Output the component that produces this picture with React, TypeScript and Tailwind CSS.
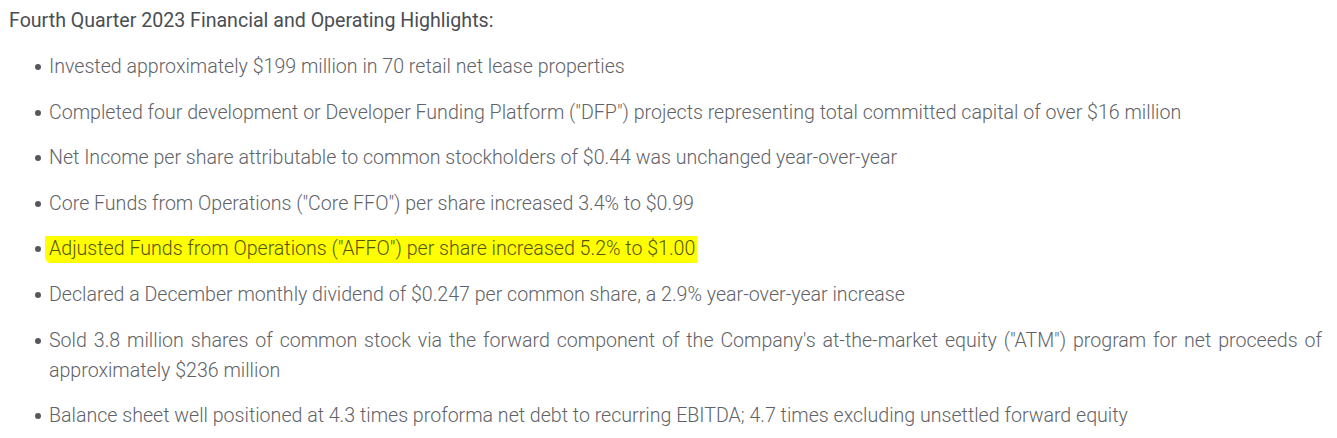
const items: { text: string; highlight?: boolean }[] = [
  { text: 'Invested approximately $199 million in 70 retail net lease properties' },
  {
    text: 'Completed four development or Developer Funding Platform ("DFP") projects representing total committed capital of over $16 million',
  },
  { text: 'Net Income per share attributable to common stockholders of $0.44 was unchanged year-over-year' },
  { text: 'Core Funds from Operations ("Core FFO") per share increased 3.4% to $0.99' },
  { text: 'Adjusted Funds from Operations ("AFFO") per share increased 5.2% to $1.00', highlight: true },
  { text: 'Declared a December monthly dividend of $0.247 per common share, a 2.9% year-over-year increase' },
  {
    text: "Sold 3.8 million shares of common stock via the forward component of the Company's at-the-market equity (\"ATM\") program for net proceeds of approximately $236 million",
  },
  {
    text: 'Balance sheet well positioned at 4.3 times proforma net debt to recurring EBITDA; 4.7 times excluding unsettled forward equity',
  },
];

export default function App() {
  return (
    <div className="w-[1337px] h-[438px] bg-white overflow-hidden pl-[9px] pr-[15px] pt-[7px] font-['Roboto',sans-serif] text-[#5f6368]">
      <p className="text-[19.6px] leading-[28px] font-normal text-[#4a4e53]">
        Fourth Quarter 2023 Financial and Operating Highlights:
      </p>
      <ul className="mt-[17px] flex flex-col gap-[15.6px]">
        {items.map((item) => (
          <li key={item.text} className="flex text-[19.6px] leading-[30px] font-light">
            <span className="w-[40px] shrink-0 flex justify-end pr-[8px] pt-[12px]">
              <span className="block w-[6px] h-[6px] rounded-full bg-[#55595e]" />
            </span>
            <span className="flex-1 text-justify">
              {item.highlight ? (
                <span className="bg-[#ffff00] text-[#55550f] pl-[4px] -ml-[4px] pr-[2px] pt-[1px] pb-[3px] rounded-bl-[6px]">
                  {item.text}
                </span>
              ) : (
                item.text
              )}
            </span>
          </li>
        ))}
      </ul>
    </div>
  );
}
